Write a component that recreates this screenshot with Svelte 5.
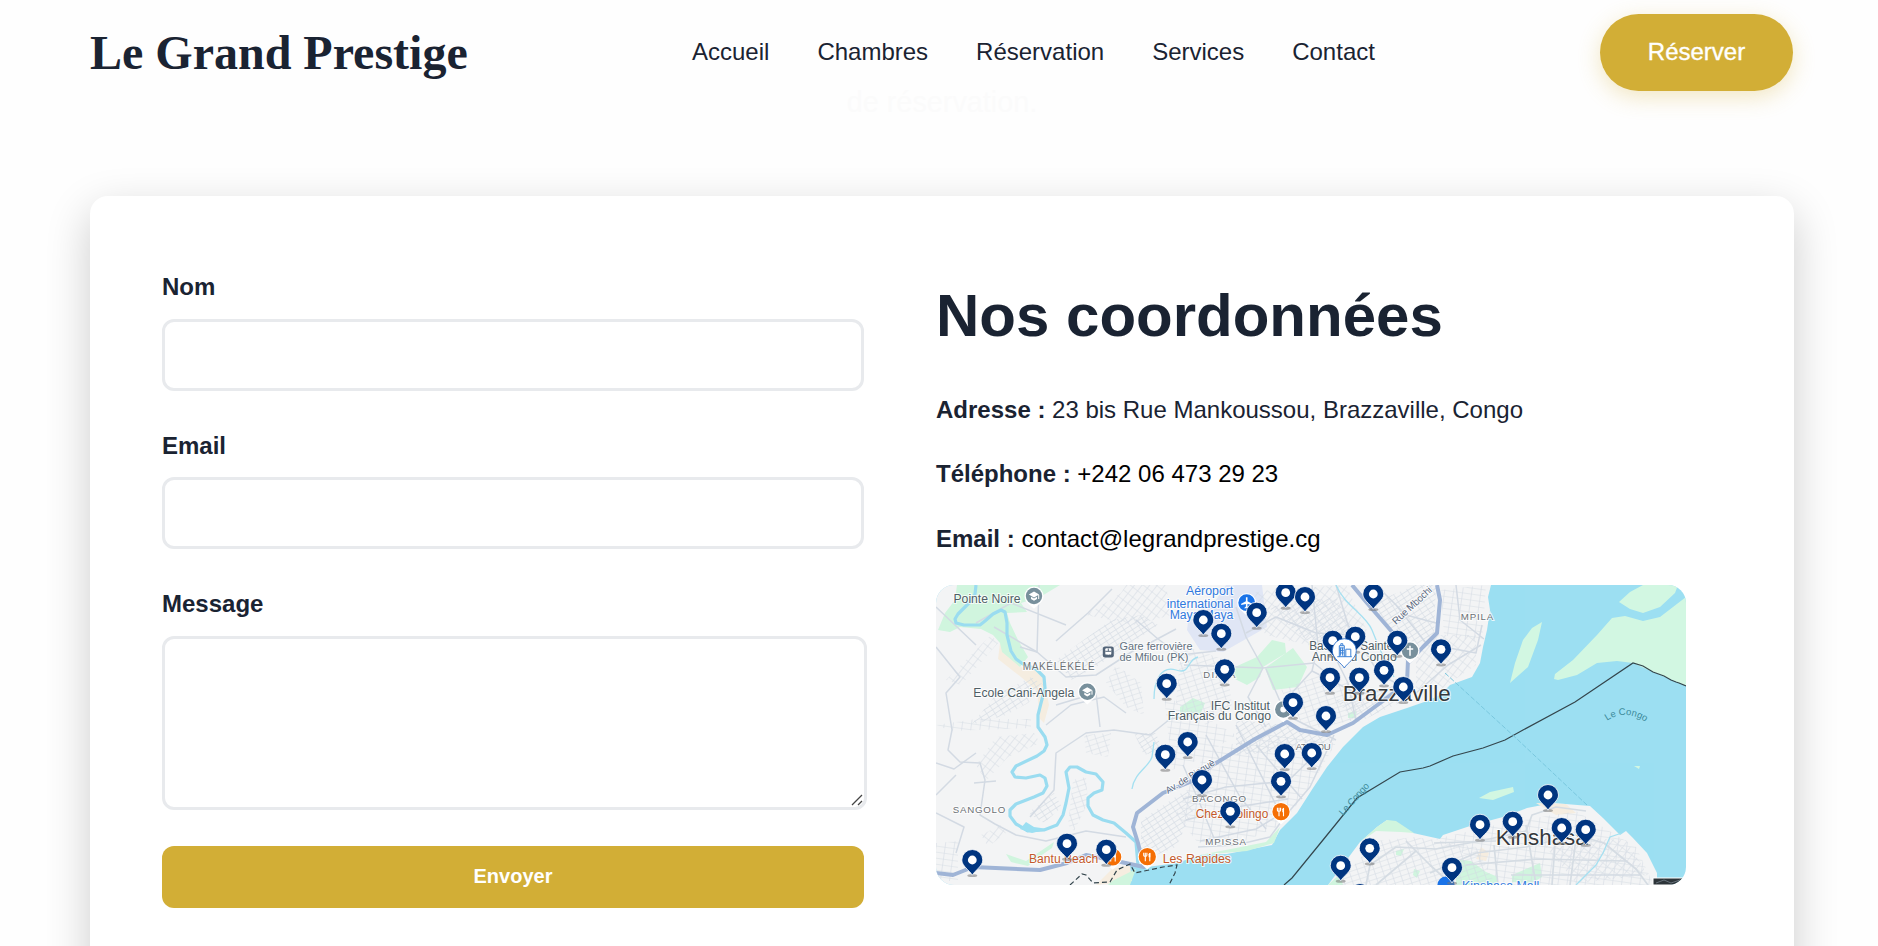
<script>
  const nav = ['Accueil', 'Chambres', 'Réservation', 'Services', 'Contact'];

  // Hotel pins: centre of each head, in map units
  const pins = [
    [349.7, 7.7], [369, 12], [437.3, 9], [320.7, 27.7], [267.3, 35], [285.3, 48.7],
    [419.3, 51.7], [396.7, 55.7], [461.3, 55.7], [505, 64.3], [288.7, 84.3], [448, 85.3],
    [394, 92.7], [423.3, 92.7], [230.7, 98.7], [467.3, 102], [357, 117.7], [390, 131],
    [251.7, 157], [375.7, 168], [348.7, 169], [229.3, 169.7], [266, 195], [345, 196.3],
    [612, 210], [294.3, 226.3], [576.7, 236.7], [544, 239.7], [625.7, 243], [649.7, 244.7],
    [131, 258.7], [433.7, 263.3], [170.3, 264.7], [36.3, 275], [404.7, 280.7], [516, 282.7],
    [424, 309]
  ];

  // Districts filled with a street grid: pattern name, outline
  const streets = [
    ['a', '120,75 175,35 205,30 222,40 190,62 160,82 135,95'],
    ['b', '150,30 185,8 190,0 230,0 235,30 200,40'],
    ['c', '180,80 205,98 208,130 190,122 170,98'],
    ['a', '60,110 95,92 108,100 92,118 70,130 35,140'],
    ['b', '10,95 55,50 62,58 25,100'],
    ['d', '0,140 40,134 95,134 95,143 15,146'],
    ['c', '148,150 175,148 172,172 150,168'],
    ['a', '198,148 220,148 226,165 208,170'],
    ['b', '60,152 98,148 104,158 72,172 50,196 40,180'],
    ['a', '92,228 118,208 126,222 108,238'],
    ['c', '137,195 150,192 152,218 138,246 132,240'],
    ['a', '205,235 250,205 262,215 240,262 205,276'],
    ['d', '0,258 22,256 22,296 0,296'],
    ['b', '45,250 65,240 70,248 52,262'],
    ['d', '228,110 265,130 300,150 262,175 236,185'],
    ['c', '245,60 290,75 296,120 270,140 240,118'],
    ['b', '300,10 335,5 410,0 432,48 380,62 330,50'],
    ['a', '332,22 400,12 420,50 376,60'],
    ['d', '270,165 335,150 400,158 372,205 345,240 300,260 262,258 240,230'],
    ['a', '300,135 350,140 400,155 360,165 300,170'],
    ['c', '345,105 390,88 440,110 415,136 370,145'],
    ['a', '432,20 480,0 500,0 498,48 478,66 452,40'],
    ['b', '480,66 502,50 540,50 540,80 505,104 480,104'],
    ['d', '505,5 550,0 546,58 508,50'],
    ['a', '400,115 460,100 470,115 420,138'],
    ['c', '440,256 480,252 540,262 560,300 400,300'],
    ['d', '500,254 560,240 640,226 700,262 718,300 570,300 540,275'],
    ['b', '600,250 690,255 712,290 640,298']
  ];

  // Minor through roads
  const roads = [
    'M0 22 40 60M0 62 24 92 10 108 16 145M40 38 75 18 130 40M84 62 101 67 103 0',
    'M58 42 101 67 130 92 160 90 200 64M16 145 12 165 24 177 44 178 49 195 44 230 59 239 80 250 110 256 150 246 190 252',
    'M94 232 118 205 120 168 150 148 178 145 214 150 234 134 270 128',
    'M110 140 135 120 168 112 190 128M120 120 160 108 164 142',
    'M0 178 18 184 40 168M20 190 0 210M38 198 60 196M0 228 28 242 20 268',
    'M120 56 152 28 176 4M200 35 222 54 244 70 280 66M210 60 240 44',
    'M300 22 310 52 327 83 312 112 330 142M327 83 378 78 400 96M248 80 327 83M330 84 350 130 400 155',
    'M310 48 340 32 380 48 416 50M376 0 382 60 376 86 352 112M400 0 412 40 444 90',
    'M376 86 420 108 448 106M420 136 412 98 398 70M444 90 480 108 512 80 545 60',
    'M247 180 262 214 280 258M270 150 304 212 330 244M300 140 344 228M320 160 366 214',
    'M247 214 290 202 352 196 384 165M250 235 300 222 352 214M264 256 320 244 350 226',
    'M398 150 388 172 374 202 350 230 334 252 300 260 262 262',
    'M440 0 470 30 500 38M460 20 490 58M520 0 524 35 548 54M508 62 540 68 546 40'
  ];
  const kinRoads = [
    'M430 300 434 280 460 262 500 264 544 256 590 246 596 230 620 222 650 226',
    'M494 288 540 268 590 262 640 250 668 258 700 284 712 300',
    'M470 256 494 280 516 300M558 260 562 300M590 240 600 300M620 246 616 300M640 254 634 300M530 280 600 274 690 276M575 290 704 290M480 266 440 300M498 258 560 256'
  ];

  // x, baseline, width, size, class, text
  const labels = [
    [17.5, 17.5, 67, 12.3, 'poi', 'Pointe Noire'],
    [86.7, 85, 72, 10, 'area', 'MAKÉLÉKÉLÉ'],
    [183.5, 65, 73, 11.5, 'rail', 'Gare ferrovière'],
    [183.5, 75.5, 69, 11.5, 'rail', 'de Mfilou (PK)'],
    [37.3, 111.7, 101, 12.3, 'poi', 'Ecole Cani-Angela'],
    [250, 10, 47.3, 12.3, 'air', 'Aéroport'],
    [230.7, 22.5, 66.6, 12.3, 'air', 'international'],
    [233.7, 34, 63.6, 12.3, 'air', 'Maya-Maya'],
    [373.3, 64.7, 88, 12.3, 'poi', 'Basilique Sainte-'],
    [375.7, 76, 85, 12.3, 'poi', 'Anne du Congo'],
    [267.3, 92.7, 32, 9.5, 'area', 'DIATA'],
    [274.7, 124.5, 59.3, 12.3, 'poi', 'IFC Institut'],
    [231.7, 135, 103.3, 12.3, 'poi', 'Français du Congo'],
    [524.7, 34.7, 32.6, 9.7, 'area', 'MPILA'],
    [359.7, 165, 35, 9.7, 'area', 'ATALOU'],
    [256, 216.7, 54, 9.7, 'area', 'BACONGO'],
    [259.7, 232.5, 72.6, 12.5, 'food', 'Chez Molingo'],
    [269.3, 259.7, 40.7, 9.7, 'area', 'MPISSA'],
    [226.7, 277.5, 68.3, 12.5, 'food', 'Les Rapides'],
    [93, 277.5, 69.3, 12.5, 'food', 'Bantu Beach'],
    [16.7, 228, 52.6, 9.7, 'area', 'SANGOLO'],
    [526, 305, 77.3, 12.3, 'air', 'Kinshasa Mall'],
    [406.7, 115.7, 108, 22.5, 'city', 'Brazzaville'],
    [559.7, 259.7, 92, 22.5, 'city', 'Kinshasa']
  ];
  const schools = [[98, 11], [151.3, 106.7]];
  const foods = [[345, 226.7], [211.3, 271.7], [176.7, 272]];
</script>

<header>
  <div class="brand">Le Grand Prestige</div>
  <nav>
    {#each nav as item}<a href="#{item}">{item}</a>{/each}
  </nav>
  <a class="reserve" href="#reserver">Réserver</a>
</header>

<main>
  <p class="intro">de réservation.</p>
  <section class="card">
    <form onsubmit={(e) => e.preventDefault()}>
      <label for="nom">Nom</label>
      <input id="nom" type="text" />
      <label for="email">Email</label>
      <input id="email" type="email" />
      <label for="message">Message</label>
      <div class="area-wrap">
        <textarea id="message"></textarea>
        <svg class="grip" width="12" height="12" viewBox="0 0 12 12"><path d="M1 11 11 1M7 11 11 7" /></svg>
      </div>
      <button type="submit">Envoyer</button>
    </form>

    <div class="info">
      <h2>Nos coordonnées</h2>
      <p><strong>Adresse :</strong> 23 bis Rue Mankoussou, Brazzaville, Congo</p>
      <p><strong>Téléphone :</strong> <a href="tel:+242064732923">+242 06 473 29 23</a></p>
      <p><strong>Email :</strong> <a href="mailto:contact@legrandprestige.cg">contact@legrandprestige.cg</a></p>

      <svg class="map" viewBox="0 0 750 300" width="750" height="300">
        <defs>
          <pattern id="a" width="7" height="4.5" patternUnits="userSpaceOnUse" patternTransform="rotate(-33)"><path d="M0 0H7M0 0V4.5" /></pattern>
          <pattern id="b" width="6" height="8" patternUnits="userSpaceOnUse" patternTransform="rotate(38)"><path d="M0 0H6M0 0V8" /></pattern>
          <pattern id="c" width="8" height="5" patternUnits="userSpaceOnUse" patternTransform="rotate(-18)"><path d="M0 0H8M0 0V5" /></pattern>
          <pattern id="d" width="9" height="6" patternUnits="userSpaceOnUse" patternTransform="rotate(8)"><path d="M0 0H9M0 0V6" /></pattern>
          <path id="congo" d="M671 136Q691 122 714 140" />
          <g id="pin">
            <ellipse cx="0" cy="15.5" rx="5" ry="1.6" fill="#777" opacity=".55" />
            <path d="M0 15.2C-3 10-10.5 6-10.5 0A10.5 10.5 0 0 1 10.5 0C10.5 6 3 10 0 15.2Z" fill="#003580" stroke="#fff" stroke-width=".8" />
            <circle r="4.4" fill="#fff" />
          </g>
          <path id="drop" d="M0 12.8-5.5 7.8A9.5 9.5 0 1 1 5.5 7.8Z" fill="#fff" />
        </defs>

        <rect width="750" height="300" fill="#9cdff2" />
        <path class="land" d="M0 0H555L552 12 554 25 551 45 547 62 544 78 536 92 514 100 504 110 491 116 471 123 444 132 427 142 407 162 391 182 377 203 361 228 344 245 336 260 311 265 291 269 264 270 241 278 211 282 194 280 194 292 184 300H0Z" />
        <path class="land" d="M392 300 424 257 441 242 451 235 477 248 504 254 507 250 537 240 567 232 591 223 617 218 654 221 667 233 684 250 690 246 696 252 711 268 721 288V300Z" />

        <path class="sand" d="M64 58 84 82 104 85 109 98 113 120 108 138 104 134 101 106 85 92 62 74ZM176 284 194 280 196 296 160 300ZM600 218 630 219 640 228 620 230ZM545 262 553 268 550 276 540 274Z" />
        <path class="green" d="M21 0 19 15 9 28 2 45 14 47 24 42 45 44 57 50 64 58 66 67 84 82 92 72 82 55 74 38 71 28 91 27 85 18 104 12 124 0Z" />
        <path class="green" d="M336 55 349 58 350 68 327 82 324 92 311 100 297 93 299 82 321 72ZM329 83 357 63 371 82 362 102 337 105ZM244 122 257 113 269 118 264 130 244 128ZM412 128 420 126 420 133 412 133Z" />
        <path class="green" d="M70 269 90 276 118 257 116 263 100 274 92 281 75 277ZM264 270 300 263 330 257 344 242 338 258 311 266ZM176 296 200 284 194 300H172Z" />
        <path class="green" d="M424 257 441 242 451 235 460 236 478 248 465 247 440 246ZM392 300 404 289 407 300ZM460 266 468 264 465 271 460 270ZM478 284 484 286 481 293 477 290Z" />
        <path class="green" d="M520 274 535 276 550 287 562 292 560 300H520ZM576 290 604 278 606 292 596 298 576 297Z" />
        <path class="air-zone" d="M290 0H326L331 42 287 67 264 65 251 45 253 30 278 18Z" />

        <g class="grids">
          {#each streets as [id, pts]}<polygon points={pts} fill="url(#{id})" />{/each}
        </g>
        <g class="roads">
          {#each roads as d}<path {d} />{/each}
        </g>
        <g class="roads kin">
          {#each kinRoads as d}<path {d} />{/each}
        </g>

        <path class="river" d="M40 0 39 9 36 15 22 29 19 34 20 38 28 40 38 40 44 40 49 36 57 29 65 25 69 27 71 38 71 50 75 66 80 74 87 79 100 84 108 92 109 103 105 118 102 130 102 142 109 152 111 160 108 166 101 171 80 181 76 187 79 192 90 193 104 190 109 193 111 201 107 208 98 212 80 219 74 225 74 231 80 239 92 246 108 245 121 240 127 230 130 218 133 203 130 187 134 182 141 182 150 187 160 189 167 197 166 205 158 208 152 213 152 221 157 230 167 235 178 238 190 248 200 257 202 280" />
        <path class="stream" d="M218 114C218 96 225 80 240 85S250 75 262 72M218 157 216 172C213 182 198 188 196 204M400 0C408 20 430 30 436 45S450 80 458 92M667 268 674 252 686 248M667 268 660 280 640 300" />
        <path fill="#9cdff2" d="M84 244 90 237 98 242 112 244 96 248Z" />

        <path class="highway" d="M0 288 17 290 37 282 104 285 131 278 150 270 185 277 208 282 202 258 197 242 201 228 227 208 254 197 277 180 319 154 351 137 364 145 391 150 417 138 444 118 471 98 472 75 457 48 431 18 416 0" />
        <path class="highway" d="M472 78 487 62 501 48 504 15 501 0" />

        <path class="isle" d="M606 37 602 55 592 82 574 98 579 78 587 55 596 43ZM683 17 694 7 707 0H742L739 8 724 22 707 28 694 24ZM750 12 724 32 707 36 689 31 676 33 661 50 637 75 619 89 618 94 622 95 641 90 661 78 681 76 697 78 717 87 750 101ZM543 213 554 207 577 202 578 207 557 215ZM698 181 704 181 703 184Z" />
        <path class="border" d="M750 101 743 98 740 97 735 95 728 91 717 87 707 81 697 78 639 117 587 145 569 155 547 163 517 171 494 181 487 183 464 187 421 213 387 255 356 293 348 300" />
        <path class="border dash" d="M134 300 146 289 150 290 157 298 174 297 181 285 194 279 199 288 227 282 241 280 239 288 233 300" />
        <path class="ferry" d="M509 88 581 154 651 220" />

        {#each labels as [x, y, w, size, kind, text]}
          <text class={kind} {x} {y} font-size={size} textLength={w} lengthAdjust={kind === 'area' ? 'spacing' : 'spacingAndGlyphs'}>{text}</text>
        {/each}
        <text class="road-name" font-size="10" transform="translate(460 40) rotate(-43)" textLength="50">Rue Mbochi</text>
        <text class="road-name" font-size="9.5" transform="translate(232 209) rotate(-32)" textLength="56">Av. de Biequè</text>
        <text class="water" font-size="9.5" transform="translate(407 231) rotate(-48)" textLength="40">Le Congo</text>
        <text class="water" font-size="9.5"><textPath href="#congo">Le Congo</textPath></text>

        {#each schools as [x, y]}
          <g transform="translate({x} {y})">
            <use href="#drop" /><circle r="8.2" fill="#78909c" />
            <path d="M-5.2-1.5 0-4.5 5.2-1.5 0 1.5ZM-3 .8V3L0 4.7 3 3V.8L0 2.5Z" fill="#fff" /><path d="M4.7-1V3" stroke="#fff" />
          </g>
        {/each}
        <g transform="translate(347.3 124.5)"><use href="#drop" /><circle r="8.2" fill="#78909c" /><circle r="3" fill="#fff" /></g>
        <g transform="translate(474 65.7)"><use href="#drop" /><circle r="8.2" fill="#78909c" /><path d="M0-5V5M-3.2-1.8H3.2" stroke="#fff" stroke-width="1.5" /></g>
        <g transform="translate(172.3 67)">
          <rect x="-5.5" y="-5.5" width="11" height="11" rx="2.2" fill="#546579" /><rect x="-3" y="-3.7" width="6" height="6.5" rx="1" fill="#fff" />
          <path d="M-3-.7H3M0-3.5V-.7M-2.6 4.2-1.5 2.6M2.6 4.2 1.5 2.6" stroke="#546579" />
        </g>
        <g transform="translate(310.7 17.7)">
          <use href="#drop" /><circle r="8.4" fill="#1a73e8" />
          <path d="M-.8-5.5H.8V-1.5L5.5 1V2.3L.8 1.2V3.7L2.2 5V5.8L0 5.2-2.2 5.8V5L-.8 3.7V1.2L-5.5 2.3V1L-.8-1.5Z" fill="#fff" />
        </g>
        <circle cx="510" cy="300" r="8.5" fill="#1a73e8" />
        {#each foods as [x, y]}
          <g transform="translate({x} {y})">
            <use href="#drop" /><circle r="8.6" fill="#f56f05" />
            <path d="M-2-4V4.5M-3.6-4V-1.5Q-3.6-.4-2-.4T-.4-1.5V-4M2.5-3.8V4.5" stroke="#fff" fill="none" stroke-width="1.1" /><path d="M1.3.5V-2.5Q1.6-4 3-4V.5Z" fill="#fff" />
          </g>
        {/each}

        {#each pins as [x, y]}<use href="#pin" {x} {y} />{/each}

        <g transform="translate(408.3 65.7)">
          <path d="M0 17.3C-3 12-12 8-12 0A12 12 0 0 1 12 0C12 8 3 12 0 17.3Z" fill="#fff" stroke="#1a65c7" stroke-width=".8" />
          <path d="M-5 6V-5H0V6M-3.5-5V-7H-1.5V-5M1.5 6V-1.5H6.5V6M-7 6H7.5M-3.7-3V5M-1.7-3V5" fill="none" stroke="#3b82d8" />
          <path d="M-4.5-2.8H-.5M-4.5-.3H-.5M-4.5 2.2H-.5" stroke="#3b82d8" />
        </g>
        <path d="M717 293H750V300H717Z" fill="#2d3439" stroke="#fff" />
        <path d="M720 298 728 295 735 298 744 295" stroke="#66717a" fill="none" />
      </svg>
    </div>
  </section>
</main>

<style>
  :global(body) {
    margin: 0;
    background: #fefefe;
    color: #1a2332;
    font: 24px/1.6 "Liberation Sans", Arial, sans-serif;
    overflow: hidden;
  }
  a { color: inherit; text-decoration: none; }
  header {
    box-sizing: border-box;
    height: 105px;
    padding: 0 85px 0 90px;
    display: flex;
    align-items: center;
    justify-content: space-between;
    line-height: 1;
  }
  .brand {
    width: 378px;
    margin-right: 224px;
    font: bold 48px/1 "Liberation Serif", "Times New Roman", serif;
    white-space: nowrap;
  }
  nav { display: flex; gap: 48px; flex: 1; padding-bottom: 2px; }
  .reserve {
    box-sizing: border-box;
    width: 193px;
    height: 77px;
    padding-bottom: 2px;
    display: flex;
    align-items: center;
    justify-content: center;
    border-radius: 39px;
    background: #d2ae36;
    color: #fff;
    box-shadow: 0 6px 22px rgba(212, 175, 55, .3);
    -webkit-text-stroke: .35px #fff;
  }
  main { display: flex; flex-direction: column; padding: 0 84px 0 90px; }
  .intro {
    height: 108px;
    margin: -17px 0 0;
    line-height: 1;
    font-size: 28.8px;
    text-align: center;
    color: #fbfbfb;
  }
  .card {
    box-sizing: border-box;
    height: 822px;
    padding: 72px;
    display: grid;
    grid-template-columns: 702px 1fr;
    gap: 72px;
    background: #fff;
    border-radius: 18px;
    box-shadow: 0 15px 45px rgba(0, 0, 0, .2);
  }
  form { display: flex; flex-direction: column; }
  label { height: 38.7px; margin-bottom: 12px; font-weight: bold; line-height: 38.4px; }
  input, textarea {
    box-sizing: border-box;
    border: 3px solid #e8eaed;
    border-radius: 12px;
    background: #fff;
    outline: 0;
    display: block;
  }
  input { height: 72px; margin-bottom: 36px; }
  .area-wrap { position: relative; width: 705px; height: 174px; margin-bottom: 36px; }
  textarea { width: 100%; height: 100%; resize: none; }
  .grip { position: absolute; right: 4px; bottom: 4px; stroke: #444; stroke-width: 1.3; }
  button {
    height: 62px;
    border: 0;
    border-radius: 12px;
    background: #d2ae36;
    color: #fff;
    padding-bottom: 3px;
    font: bold 20px "Liberation Sans", Arial, sans-serif;
  }
  .info { display: flex; flex-direction: column; }
  h2 { margin: 0 0 30px; padding-top: 3px; font-size: 60px; line-height: 90px; height: 90px; }
  .info p { margin: 0 0 26px; height: 38.4px; line-height: 38.4px; }
  .info p:last-of-type { margin-bottom: 26.8px; }
  .info a { color: #000; }
  .map { display: block; border-radius: 18px; }

  .land { fill: #f3f4f5; }
  .sand { fill: #f6ede0; }
  .green { fill: #d0f5de; }
  .isle { fill: #d2f7e2; }
  .air-zone { fill: #e0e6f6; }
  pattern path { fill: none; stroke: #d3dbe4; stroke-width: 1.2; }
  .grids { opacity: .9; }
  .roads path { fill: none; stroke: #d3dae3; stroke-width: 1.5; stroke-linejoin: round; }
  .kin path { stroke: #d5dce3; stroke-width: 1.7; }
  .river { fill: none; stroke: #9adcf0; stroke-width: 3.2; stroke-linejoin: round; }
  .stream { fill: none; stroke: #a5e0f1; stroke-width: 1.3; }
  .highway { fill: none; stroke: #9fb4d6; stroke-width: 4; stroke-linejoin: round; }
  .border { fill: none; stroke: #34464d; stroke-width: 1.2; }
  .dash { stroke-dasharray: 5 3; }
  .ferry { fill: none; stroke: #79c7de; stroke-width: 1; stroke-dasharray: 5 2; }
  .map text {
    font-family: "Liberation Sans", Arial, sans-serif;
    paint-order: stroke;
    stroke: #fff;
    stroke-width: 2px;
    stroke-opacity: .75;
  }
  .poi { fill: #4f5e65; }
  .area { fill: #6b7075; }
  .rail { fill: #62717f; }
  .air { fill: #3079de; }
  .food { fill: #c3592b; }
  .city { fill: #35393d; }
  .road-name { fill: #5a6880; }
  .map .water { fill: #3b8999; stroke: none; }
</style>
